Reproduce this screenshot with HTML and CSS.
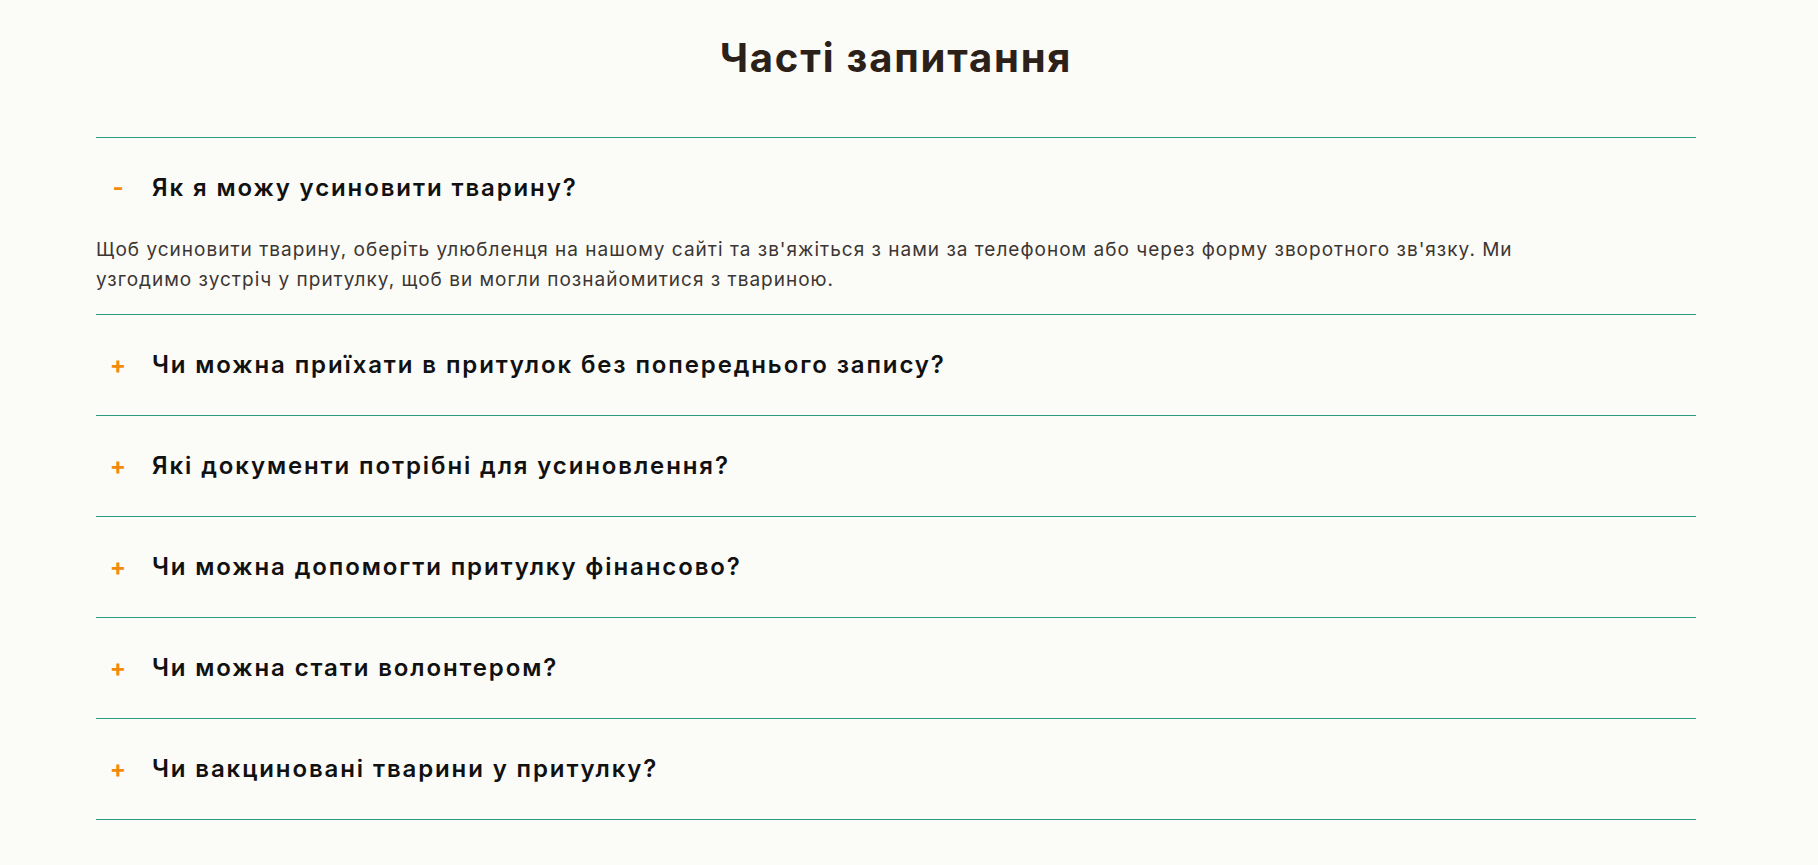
FILE: index.html
```html
<!DOCTYPE html>
<html lang="uk">
<head>
<meta charset="utf-8">
<title>Часті запитання</title>
<link rel="stylesheet" href="styles.css">
</head>
<body>
<section class="faq">
  <h2 class="faq-title">Часті запитання</h2>
  <div class="faq-list">
    <div class="faq-item open">
      <div class="faq-q"><span class="faq-icon">-</span><span class="faq-text">Як я можу усиновити тварину?</span></div>
      <p class="faq-a">Щоб усиновити тварину, оберіть улюбленця на нашому сайті та зв'яжіться з нами за телефоном або через форму зворотного зв'язку. Ми узгодимо зустріч у притулку, щоб ви могли познайомитися з твариною.</p>
    </div>
    <div class="faq-item">
      <div class="faq-q"><span class="faq-icon">+</span><span class="faq-text">Чи можна приїхати в притулок без попереднього запису?</span></div>
    </div>
    <div class="faq-item">
      <div class="faq-q"><span class="faq-icon">+</span><span class="faq-text">Які документи потрібні для усиновлення?</span></div>
    </div>
    <div class="faq-item">
      <div class="faq-q"><span class="faq-icon">+</span><span class="faq-text">Чи можна допомогти притулку фінансово?</span></div>
    </div>
    <div class="faq-item">
      <div class="faq-q"><span class="faq-icon">+</span><span class="faq-text">Чи можна стати волонтером?</span></div>
    </div>
    <div class="faq-item">
      <div class="faq-q"><span class="faq-icon">+</span><span class="faq-text">Чи вакциновані тварини у притулку?</span></div>
    </div>
  </div>
</section>
</body>
</html>
```
FILE: styles.css
```css
* { box-sizing: border-box; }
html, body {
  margin: 0;
  padding: 0;
  background: #fbfbf8;
}
body {
  font-family: "Inter", "Open Sans", sans-serif;
  color: #1a1a1a;
}
.faq {
  padding: 34px 122px 0 96px;
}
.faq-title {
  margin: 0 0 55px;
  text-align: center;
  font-size: 40px;
  line-height: 48px;
  font-weight: 700;
  letter-spacing: 1.8px;
  color: #2b2119;
}
.faq-list {
  border-top: 1px solid #2b9b7d;
}
.faq-item {
  border-bottom: 1px solid #2b9b7d;
}
.faq-q {
  display: flex;
  align-items: center;
  gap: 12px;
  padding: 35px 0;
  font-size: 24px;
  line-height: 30px;
  font-weight: 600;
  letter-spacing: 1.88px;
  color: #111;
}
.faq-item.open .faq-q {
  padding-bottom: 32px;
}
.faq-icon {
  width: 44px;
  text-align: center;
  color: #f28a0c;
  font-weight: 700;
  letter-spacing: 0;
}
.faq-a {
  margin: 0;
  padding-bottom: 19px;
  max-width: 1460px;
  font-size: 19px;
  line-height: 30px;
  letter-spacing: 1px;
  color: #3b3632;
}
```
